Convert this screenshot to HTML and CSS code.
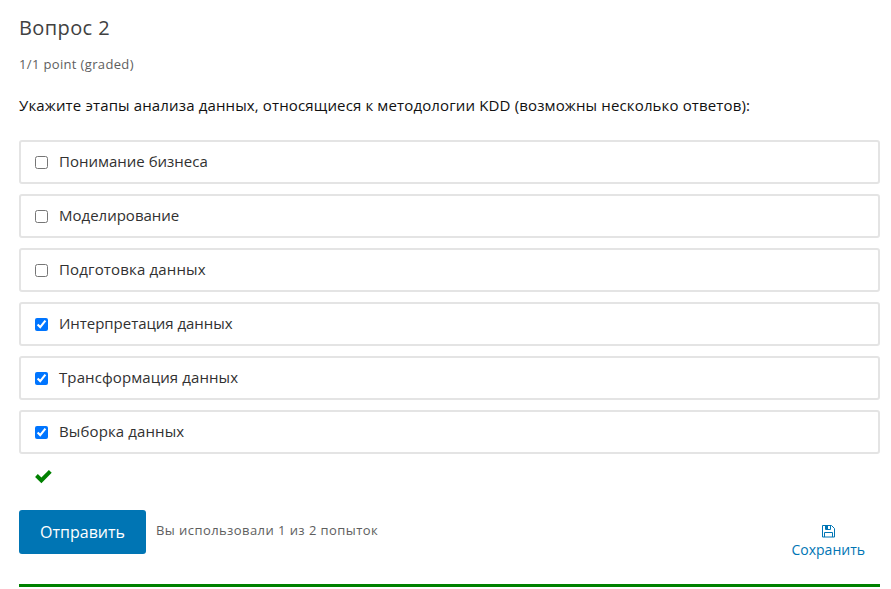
FILE: index.html
```html
<!DOCTYPE html>
<html lang="ru">
<head>
<meta charset="utf-8">
<title>Вопрос 2</title>
<link rel="stylesheet" href="styles.css">
</head>
<body>
<main class="problem">
  <h3 class="title">Вопрос 2</h3>
  <div class="progress">1/1 point (graded)</div>
  <p class="question">Укажите этапы анализа данных, относящиеся к методологии KDD (возможны несколько ответов):</p>
  <div class="choices">
    <label class="choice"><input type="checkbox"><span>Понимание бизнеса</span></label>
    <label class="choice"><input type="checkbox"><span>Моделирование</span></label>
    <label class="choice"><input type="checkbox"><span>Подготовка данных</span></label>
    <label class="choice"><input type="checkbox" checked><span>Интерпретация данных</span></label>
    <label class="choice"><input type="checkbox" checked><span>Трансформация данных</span></label>
    <label class="choice"><input type="checkbox" checked><span>Выборка данных</span></label>
  </div>
  <div class="status"><svg width="17" height="14" viewBox="0 0 17 14"><path d="M0.1 6.9 2.8 4.1 6.4 7.5 13.9 .1 16.7 2.8 6.4 13.2Z" fill="#008100"/></svg></div>
  <div class="action">
    <button class="submit">Отправить</button>
    <span class="attempts">Вы использовали 1 из 2 попыток</span>
    <button class="save"><svg width="13" height="13" viewBox="0 0 13 13" fill="none" stroke="#0075b4"><path d="M.5.5h9l3 3v8.5H.5zM3.5.5v4h5v-4M2.5 12V7.5h8V12"/><path d="M3.5.5H6v3.5H3.5z" fill="#0075b4" stroke="none"/></svg><span>Сохранить</span></button>
  </div>
</main>
</body>
</html>
```
FILE: styles.css
```css
* { box-sizing: border-box; }
body { margin: 0; background: #fff; font-family: "Open Sans", sans-serif; color: #313131; }
.problem { width: 861px; height: 587px; margin-left: 19px; padding-top: 14px; border-bottom: 3px solid #008100; }
.title { margin: 0; font-size: 20px; line-height: 28px; font-weight: 400; letter-spacing: .4px; color: #414141; }
.progress { margin-top: 13px; font-size: 13px; line-height: 19px; letter-spacing: .35px; color: #5e5e5e; }
.question { margin: 20px 0 23px; font-size: 15px; line-height: 23px; letter-spacing: .14px; white-space: nowrap; color: #111; }
.choices { display: flex; flex-direction: column; gap: 10px; }
.choice { display: flex; align-items: center; height: 44px; padding-left: 14px; border: 2px solid #e4e4e4; border-radius: 3px; font-size: 15px; }
.choice input { width: 13px; height: 13px; margin: 0 11px 0 0; }
.choice span { padding-bottom: 2px; }
.choice:nth-child(3) span { letter-spacing: .16px; }
.choice:nth-child(4) span { letter-spacing: -.04px; }
.choice:nth-child(5) span { letter-spacing: .1px; }
.choice:nth-child(6) span { letter-spacing: .12px; }
.status { height: 56px; padding: 16px 0 0 16px; }
.status svg { display: block; }
.action { display: flex; height: 50px; }
.submit { width: 127px; height: 44px; border: 0; border-radius: 3px; background: #0075b4; color: #fff; font: 400 16px "Open Sans", sans-serif; }
.attempts { margin: 11px auto 0 10px; font-size: 13px; line-height: 19px; letter-spacing: .43px; color: #5e5e5e; }
.save { display: flex; flex-direction: column; align-items: center; margin: 15px 15px 0 0; padding: 0; border: 0; background: none; color: #0075b4; font: 400 14px/19px "Open Sans", sans-serif; }
.save svg { margin-bottom: 2px; }
```
